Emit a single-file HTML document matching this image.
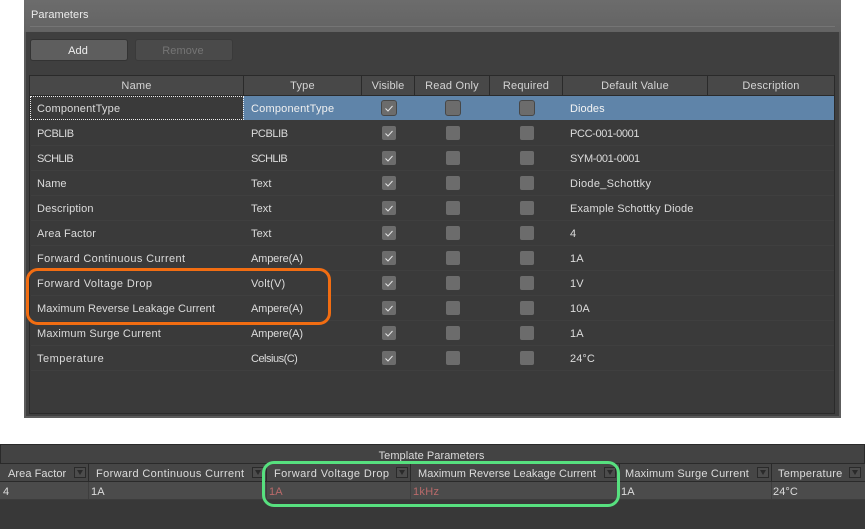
<!DOCTYPE html>
<html><head><meta charset="utf-8">
<style>
html,body{margin:0;padding:0;background:#fff}
#r{position:relative;width:865px;height:529px;overflow:hidden;background:#fff;font-family:"Liberation Sans",sans-serif;font-size:11px;letter-spacing:.07px;color:#dcdcdc;filter:blur(.3px)}
#r div{position:absolute;box-sizing:border-box}
.t{white-space:nowrap;line-height:14px;margin-top:1px}
.h{white-space:nowrap;line-height:14px;text-align:center;color:#d4d4d4;top:79px;letter-spacing:.2px}
.v{width:1px;background:#2a2a2a}
.cb{width:14px;height:14px;background:#6c6c6c;border-radius:2px}
.sel{width:16px;height:16px;background:#6c6c6c;border:1px solid #474747;border-radius:3px}
.ln{height:1px;background:#3f3f3f;left:31px;width:803px}
.f{width:12px;height:11px;border:1px solid #2a2a2a;background:#4c4c4c;top:467px}
.f:after{content:"";position:absolute;left:2px;top:2px;border-left:3px solid transparent;border-right:3px solid transparent;border-top:5px solid #2a2a2a}
svg{position:absolute}
</style></head><body>
<div id="r">
<!-- panel -->
<div style="left:24px;top:0;width:817px;height:418px;background:#5c5c5c"></div>
<div style="left:24px;top:0;width:817px;height:32px;background:linear-gradient(#6c6c6c,#636363)"></div>
<div style="left:30px;top:26px;width:805px;height:1px;background:#757575"></div>
<div style="left:26px;top:32px;width:813px;height:384px;background:#3f3f3f"></div>
<div class="t" style="left:31px;top:7px;color:#ececec">Parameters</div>
<!-- buttons -->
<div style="left:30px;top:39px;width:98px;height:22px;background:#5e5e5e;border:1px solid #333;border-radius:3px"></div>
<div class="t" style="left:29px;width:98px;text-align:center;top:43px;color:#efefef">Add</div>
<div style="left:135px;top:39px;width:98px;height:22px;background:#4a4a4a;border:1px solid #3a3a3a;border-radius:3px"></div>
<div class="t" style="left:134px;width:98px;text-align:center;top:43px;color:#757575">Remove</div>
<!-- table -->
<div style="left:29px;top:75px;width:806px;height:339px;background:#3a3a3a;border:1px solid #2a2a2a"></div>
<div style="left:30px;top:76px;width:804px;height:19px;background:#484848"></div>
<div style="left:30px;top:95px;width:804px;height:1px;background:#2a2a2a"></div>
<div class="v" style="left:243px;top:76px;height:19px"></div>
<div class="v" style="left:361px;top:76px;height:19px"></div>
<div class="v" style="left:414px;top:76px;height:19px"></div>
<div class="v" style="left:489px;top:76px;height:19px"></div>
<div class="v" style="left:562px;top:76px;height:19px"></div>
<div class="v" style="left:707px;top:76px;height:19px"></div>
<div class="h" style="left:30px;width:213px">Name</div>
<div class="h" style="left:244px;width:117px">Type</div>
<div class="h" style="left:362px;width:52px;letter-spacing:.07px">Visible</div>
<div class="h" style="left:415px;width:74px">Read Only</div>
<div class="h" style="left:490px;width:72px">Required</div>
<div class="h" style="left:563px;width:144px">Default Value</div>
<div class="h" style="left:708px;width:126px">Description</div>
<!-- row 1 -->
<div style="left:243px;top:96px;width:591px;height:24px;background:#5f84a9"></div>
<div style="left:30px;top:96px;width:214px;height:24px;border:1px dotted #eee"></div>
<div class="ln" style="top:145px"></div><div class="ln" style="top:170px"></div><div class="ln" style="top:195px"></div><div class="ln" style="top:220px"></div><div class="ln" style="top:245px"></div><div class="ln" style="top:270px"></div><div class="ln" style="top:295px"></div><div class="ln" style="top:320px"></div><div class="ln" style="top:345px"></div><div class="ln" style="top:370px"></div>

<div class="t" style="left:37px;top:101px;letter-spacing:.2px">ComponentType</div><div class="t" style="left:251px;top:101px;color:#f0f0f0;letter-spacing:.2px">ComponentType</div><div class="t" style="left:570px;top:101px;color:#f4f4f4">Diodes</div>
<div class="t" style="left:37px;top:126px;letter-spacing:-.4px">PCBLIB</div><div class="t" style="left:251px;top:126px;letter-spacing:-.4px">PCBLIB</div><div class="t" style="left:570px;top:126px;letter-spacing:-.35px">PCC-001-0001</div>
<div class="t" style="left:37px;top:151px;letter-spacing:-.6px">SCHLIB</div><div class="t" style="left:251px;top:151px;letter-spacing:-.6px">SCHLIB</div><div class="t" style="left:570px;top:151px;letter-spacing:-.35px">SYM-001-0001</div>
<div class="t" style="left:37px;top:176px">Name</div><div class="t" style="left:251px;top:176px">Text</div><div class="t" style="left:570px;top:176px;letter-spacing:.3px">Diode_Schottky</div>
<div class="t" style="left:37px;top:201px;letter-spacing:.15px">Description</div><div class="t" style="left:251px;top:201px">Text</div><div class="t" style="left:570px;top:201px;letter-spacing:.17px">Example Schottky Diode</div>
<div class="t" style="left:37px;top:226px;letter-spacing:.15px">Area Factor</div><div class="t" style="left:251px;top:226px">Text</div><div class="t" style="left:570px;top:226px">4</div>
<div class="t" style="left:37px;top:251px;letter-spacing:.37px">Forward Continuous Current</div><div class="t" style="left:251px;top:251px;letter-spacing:-.15px">Ampere(A)</div><div class="t" style="left:570px;top:251px">1A</div>
<div class="t" style="left:37px;top:276px;letter-spacing:.42px">Forward Voltage Drop</div><div class="t" style="left:251px;top:276px;letter-spacing:.2px">Volt(V)</div><div class="t" style="left:570px;top:276px">1V</div>
<div class="t" style="left:37px;top:301px;letter-spacing:.04px">Maximum Reverse Leakage Current</div><div class="t" style="left:251px;top:301px;letter-spacing:-.15px">Ampere(A)</div><div class="t" style="left:570px;top:301px">10A</div>
<div class="t" style="left:37px;top:326px;letter-spacing:.2px">Maximum Surge Current</div><div class="t" style="left:251px;top:326px;letter-spacing:-.15px">Ampere(A)</div><div class="t" style="left:570px;top:326px">1A</div>
<div class="t" style="left:37px;top:351px;letter-spacing:.5px">Temperature</div><div class="t" style="left:251px;top:351px;letter-spacing:-.5px">Celsius(C)</div><div class="t" style="left:570px;top:351px">24°C</div>

<!-- checkboxes -->
<div class="sel" style="left:381px;top:100px"></div><div class="sel" style="left:445px;top:100px"></div><div class="sel" style="left:519px;top:100px"></div>
<div class="cb" style="left:382px;top:126px"></div><div class="cb" style="left:446px;top:126px"></div><div class="cb" style="left:520px;top:126px"></div>
<div class="cb" style="left:382px;top:151px"></div><div class="cb" style="left:446px;top:151px"></div><div class="cb" style="left:520px;top:151px"></div>
<div class="cb" style="left:382px;top:176px"></div><div class="cb" style="left:446px;top:176px"></div><div class="cb" style="left:520px;top:176px"></div>
<div class="cb" style="left:382px;top:201px"></div><div class="cb" style="left:446px;top:201px"></div><div class="cb" style="left:520px;top:201px"></div>
<div class="cb" style="left:382px;top:226px"></div><div class="cb" style="left:446px;top:226px"></div><div class="cb" style="left:520px;top:226px"></div>
<div class="cb" style="left:382px;top:251px"></div><div class="cb" style="left:446px;top:251px"></div><div class="cb" style="left:520px;top:251px"></div>
<div class="cb" style="left:382px;top:276px"></div><div class="cb" style="left:446px;top:276px"></div><div class="cb" style="left:520px;top:276px"></div>
<div class="cb" style="left:382px;top:301px"></div><div class="cb" style="left:446px;top:301px"></div><div class="cb" style="left:520px;top:301px"></div>
<div class="cb" style="left:382px;top:326px"></div><div class="cb" style="left:446px;top:326px"></div><div class="cb" style="left:520px;top:326px"></div>
<div class="cb" style="left:382px;top:351px"></div><div class="cb" style="left:446px;top:351px"></div><div class="cb" style="left:520px;top:351px"></div>
<svg style="left:382px;top:100px" width="14" height="270" fill="none" stroke="#e4e4e4" stroke-width="1">
<path d="M3.500 8.500l2.500 2.500 4.500-5"/><path d="M3.500 33.500l2.500 2.500 4.500-5"/><path d="M3.500 58.500l2.500 2.500 4.500-5"/><path d="M3.500 83.500l2.500 2.500 4.500-5"/><path d="M3.500 108.500l2.500 2.500 4.500-5"/><path d="M3.500 133.500l2.500 2.500 4.500-5"/><path d="M3.500 158.500l2.500 2.500 4.500-5"/><path d="M3.500 183.500l2.500 2.500 4.500-5"/><path d="M3.500 208.500l2.500 2.500 4.500-5"/><path d="M3.500 233.500l2.500 2.500 4.500-5"/><path d="M3.500 258.500l2.500 2.500 4.500-5"/>
</svg>

<!-- bottom -->
<div style="left:0;top:444px;width:865px;height:85px;background:#383838"></div>
<div style="left:0;top:444px;width:865px;height:1px;background:#2a2a2a"></div>
<div style="left:0;top:445px;width:865px;height:18px;background:#434343;border-left:1px solid #2a2a2a;border-right:1px solid #2a2a2a"></div>
<div style="left:0;top:463px;width:865px;height:1px;background:#2a2a2a"></div>
<div style="left:0;top:464px;width:865px;height:17px;background:#464646"></div>
<div style="left:0;top:481px;width:865px;height:1px;background:#2a2a2a"></div>
<div style="left:0;top:482px;width:865px;height:17px;background:#4b4b4b"></div>
<div style="left:0;top:499px;width:865px;height:1px;background:#3c3c3c"></div>
<div class="v" style="left:88px;top:464px;height:17px"></div><div class="v" style="left:266px;top:464px;height:17px"></div><div class="v" style="left:410px;top:464px;height:17px"></div><div class="v" style="left:619px;top:464px;height:17px"></div><div class="v" style="left:771px;top:464px;height:17px"></div>
<div class="v" style="left:88px;top:482px;height:17px;background:#3e3e3e"></div><div class="v" style="left:266px;top:482px;height:17px;background:#3e3e3e"></div><div class="v" style="left:410px;top:482px;height:17px;background:#3e3e3e"></div><div class="v" style="left:619px;top:482px;height:17px;background:#3e3e3e"></div><div class="v" style="left:771px;top:482px;height:17px;background:#3e3e3e"></div>
<div class="t" style="left:-1px;width:865px;text-align:center;top:448px">Template Parameters</div>
<div class="t" style="left:8px;top:466px">Area Factor</div><div class="f" style="left:74px"></div>
<div class="t" style="left:96px;top:466px;letter-spacing:.37px">Forward Continuous Current</div><div class="f" style="left:252px"></div>
<div class="t" style="left:274px;top:466px;letter-spacing:.42px">Forward Voltage Drop</div><div class="f" style="left:396px"></div>
<div class="t" style="left:418px;top:466px;letter-spacing:.04px">Maximum Reverse Leakage Current</div><div class="f" style="left:604px"></div>
<div class="t" style="left:625px;top:466px;letter-spacing:.2px">Maximum Surge Current</div><div class="f" style="left:757px"></div>
<div class="t" style="left:778px;top:466px;letter-spacing:.25px">Temperature</div><div class="f" style="left:849px"></div>
<div class="t" style="left:3px;top:484px">4</div>
<div class="t" style="left:91px;top:484px">1A</div>
<div class="t" style="left:269px;top:484px;color:#b96a6a">1A</div>
<div class="t" style="left:413px;top:484px;color:#b96a6a;letter-spacing:.3px">1kHz</div>
<div class="t" style="left:621px;top:484px">1A</div>
<div class="t" style="left:773px;top:484px">24°C</div>
<!-- highlights -->
<div style="left:26px;top:268px;width:305px;height:57px;border:3.500px solid #f26d12;border-radius:12px"></div>
<div style="left:262px;top:461px;width:358px;height:46px;border:3.500px solid #57e07f;border-radius:12px"></div>
</div>
</body></html>
